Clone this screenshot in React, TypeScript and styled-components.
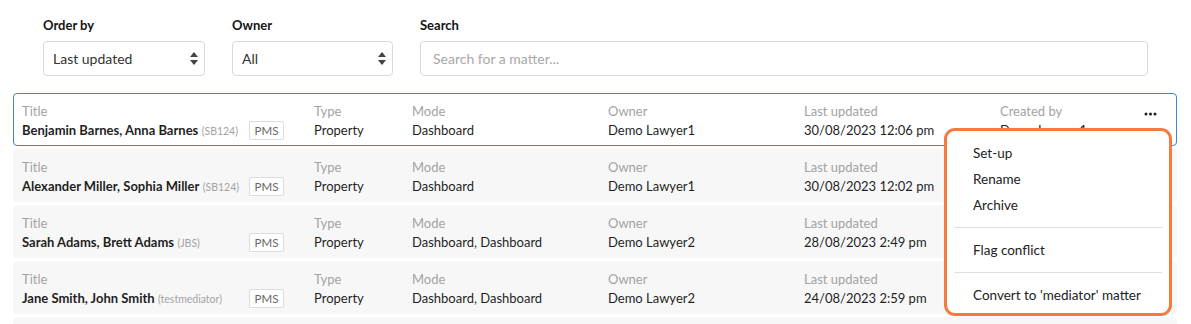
import React from 'react';
import styled, { createGlobalStyle } from 'styled-components';

const GlobalStyle = createGlobalStyle`
  html, body {
    margin: 0;
    padding: 0;
    background: #ffffff;
    font-family: Lato, "Open Sans", sans-serif;
    color: #1f1f1f;
  }
  * {
    box-sizing: border-box;
  }
`;

type Matter = {
  names: string;
  ref: string;
  type: string;
  mode: string;
  owner: string;
  updated: string;
  createdBy: string;
};

const matters: Matter[] = [
  {
    names: 'Benjamin Barnes, Anna Barnes',
    ref: 'SB124',
    type: 'Property',
    mode: 'Dashboard',
    owner: 'Demo Lawyer1',
    updated: '30/08/2023 12:06 pm',
    createdBy: 'Demo Lawyer1',
  },
  {
    names: 'Alexander Miller, Sophia Miller',
    ref: 'SB124',
    type: 'Property',
    mode: 'Dashboard',
    owner: 'Demo Lawyer1',
    updated: '30/08/2023 12:02 pm',
    createdBy: 'Demo Lawyer1',
  },
  {
    names: 'Sarah Adams, Brett Adams',
    ref: 'JBS',
    type: 'Property',
    mode: 'Dashboard, Dashboard',
    owner: 'Demo Lawyer2',
    updated: '28/08/2023 2:49 pm',
    createdBy: 'Demo Lawyer2',
  },
  {
    names: 'Jane Smith, John Smith',
    ref: 'testmediator',
    type: 'Property',
    mode: 'Dashboard, Dashboard',
    owner: 'Demo Lawyer2',
    updated: '24/08/2023 2:59 pm',
    createdBy: 'Demo Lawyer2',
  },
  {
    names: 'Emily Clark, David Clark',
    ref: 'SB124',
    type: 'Property',
    mode: 'Dashboard',
    owner: 'Demo Lawyer1',
    updated: '22/08/2023 10:15 am',
    createdBy: 'Demo Lawyer1',
  },
];

const SortArrows = () => (
  <svg width="8" height="13" viewBox="0 0 8 13">
    <path d="M4 0 L8 5 L0 5 Z" fill="#444" />
    <path d="M0 8 L8 8 L4 13 Z" fill="#444" />
  </svg>
);

const Dots = () => (
  <svg width="13" height="4" viewBox="0 0 13 4">
    <circle cx="2" cy="2" r="1.5" fill="#222" />
    <circle cx="6.5" cy="2" r="1.5" fill="#222" />
    <circle cx="11" cy="2" r="1.5" fill="#222" />
  </svg>
);

export default function App() {
  return (
    <Page>
      <GlobalStyle />
      <Filters>
        <Field>
          <FieldLabel>Order by</FieldLabel>
          <Select>
            <span>Last updated</span>
            <SortArrows />
          </Select>
        </Field>
        <Field>
          <FieldLabel>Owner</FieldLabel>
          <Select>
            <span>All</span>
            <SortArrows />
          </Select>
        </Field>
        <Field>
          <FieldLabel>Search</FieldLabel>
          <SearchInput placeholder="Search for a matter..." />
        </Field>
      </Filters>

      <List>
        {matters.map((m, i) => (
          <Row key={i} selected={i === 0}>
            <Cell>
              <CellLabel>Title</CellLabel>
              <Value>
                <Names>{m.names}</Names> <Ref>({m.ref})</Ref>
              </Value>
            </Cell>
            <BadgeCell>
              <Badge>PMS</Badge>
            </BadgeCell>
            <Cell>
              <CellLabel>Type</CellLabel>
              <Value>{m.type}</Value>
            </Cell>
            <Cell>
              <CellLabel>Mode</CellLabel>
              <Value>{m.mode}</Value>
            </Cell>
            <Cell>
              <CellLabel>Owner</CellLabel>
              <Value>{m.owner}</Value>
            </Cell>
            <Cell>
              <CellLabel>Last updated</CellLabel>
              <Value>{m.updated}</Value>
            </Cell>
            <Cell>
              <CellLabel>Created by</CellLabel>
              <Value>{m.createdBy}</Value>
            </Cell>
            <MoreCell>{i === 0 && <Dots />}</MoreCell>
          </Row>
        ))}

        <Menu>
          <MenuItem>Set-up</MenuItem>
          <MenuItem>Rename</MenuItem>
          <MenuItem>Archive</MenuItem>
          <Divider />
          <MenuItem>Flag conflict</MenuItem>
          <Divider />
          <MenuItem>Convert to 'mediator' matter</MenuItem>
        </Menu>
      </List>
    </Page>
  );
}

const Page = styled.div`
  height: 324px;
  overflow: hidden;
  padding: 16px 13px 0;
`;

const Filters = styled.div`
  display: grid;
  grid-template-columns: 162px 161px 728px;
  column-gap: 27px;
  padding-left: 30px;
`;

const Field = styled.div`
  display: flex;
  flex-direction: column;
`;

const FieldLabel = styled.div`
  font-size: 13px;
  font-weight: 700;
  line-height: 18px;
  color: #141414;
  margin-bottom: 7px;
`;

const Select = styled.div`
  height: 35px;
  border: 1px solid #d9d9d9;
  border-radius: 4px;
  background: #fff;
  display: flex;
  align-items: center;
  justify-content: space-between;
  padding: 0 6px 1px 9px;
  font-size: 14px;
  color: #333;
`;

const SearchInput = styled.input`
  height: 35px;
  border: 1px solid #d9d9d9;
  border-radius: 4px;
  padding: 0 12px 1px;
  font-family: inherit;
  font-size: 14px;
  outline: none;
  &::placeholder {
    color: #a8a8a8;
  }
`;

const List = styled.div`
  position: relative;
  display: flex;
  flex-direction: column;
  gap: 3px;
  margin-top: 17px;
  width: 1164px;
`;

const Row = styled.div<{ selected?: boolean }>`
  display: grid;
  grid-template-columns: 227px 65px 98px 196px 196px 196px 1fr 36px;
  flex: 0 0 53px;
  height: 53px;
  padding: 8px 8px 0;
  border: 1px solid ${p => (p.selected ? '#3b86cf' : 'transparent')};
  border-radius: 4px;
  background: ${p => (p.selected ? '#ffffff' : '#f7f7f7')};
`;

const Cell = styled.div`
  display: flex;
  flex-direction: column;
  white-space: nowrap;
`;

const CellLabel = styled.div`
  font-size: 13px;
  line-height: 19px;
  color: #a3a3a3;
`;

const Value = styled.div`
  font-size: 13px;
  line-height: 19px;
  color: #1f1f1f;
`;

const Names = styled.span`
  font-weight: 700;
`;

const Ref = styled.span`
  font-size: 10.5px;
  color: #a3a3a3;
`;

const BadgeCell = styled.div`
  display: flex;
  align-items: flex-end;
  padding-bottom: 5px;
`;

const Badge = styled.div`
  width: 35px;
  height: 19px;
  border: 1px solid #dcdcdc;
  border-radius: 2px;
  background: #fff;
  font-size: 11.5px;
  color: #666;
  display: flex;
  align-items: center;
  justify-content: center;
`;

const MoreCell = styled.div`
  display: flex;
  justify-content: center;
  padding-top: 10px;
`;

const Menu = styled.div`
  position: absolute;
  left: 931px;
  top: 35px;
  width: 228px;
  height: 188px;
  background: #fff;
  border: 3px solid #f47a3d;
  border-radius: 11px;
  padding: 9px 0 0;
  display: flex;
  flex-direction: column;
`;

const MenuItem = styled.div`
  flex: 0 0 26px;
  line-height: 26px;
  padding-left: 26px;
  font-size: 13.5px;
  color: #222;
`;

const Divider = styled.div`
  flex: 0 0 1px;
  background: #e0e0e0;
  margin: 9px 7px 9px 7px;
`;
